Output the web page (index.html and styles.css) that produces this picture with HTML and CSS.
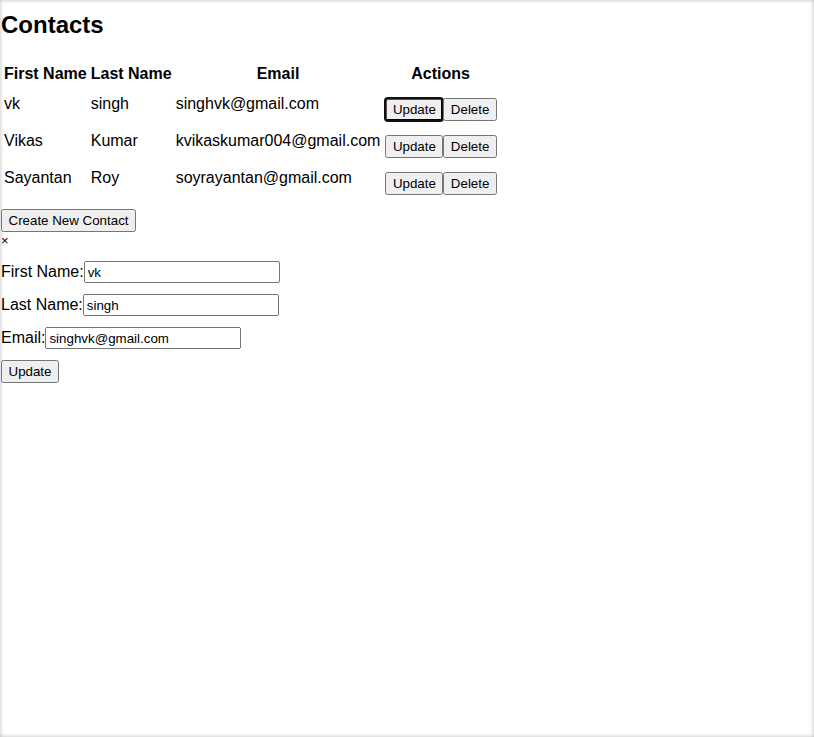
FILE: index.html
```html
<!DOCTYPE html>
<html>
<head>
<meta charset="utf-8">
<title>Contacts</title>
<link rel="stylesheet" href="styles.css">
</head>
<body>
<div class="page">
  <h2 class="title">Contacts</h2>
  <table class="contacts">
    <thead>
      <tr><th>First Name</th><th>Last Name</th><th>Email</th><th>Actions</th></tr>
    </thead>
    <tbody>
      <tr>
        <td>vk</td><td>singh</td><td>singhvk@gmail.com</td>
        <td class="actions"><div class="btns"><button class="btn focused">Update</button><button class="btn">Delete</button></div></td>
      </tr>
      <tr>
        <td>Vikas</td><td>Kumar</td><td>kvikaskumar004@gmail.com</td>
        <td class="actions"><div class="btns"><button class="btn">Update</button><button class="btn">Delete</button></div></td>
      </tr>
      <tr>
        <td>Sayantan</td><td>Roy</td><td>soyrayantan@gmail.com</td>
        <td class="actions"><div class="btns"><button class="btn">Update</button><button class="btn">Delete</button></div></td>
      </tr>
    </tbody>
  </table>
  <div class="create"><button class="btn">Create New Contact</button></div>
  <div class="modal">
    <span class="close">×</span>
    <form class="form">
      <div class="row"><label>First Name:</label><input class="field" type="text" value="vk"></div>
      <div class="row"><label>Last Name:</label><input class="field" type="text" value="singh"></div>
      <div class="row"><label>Email:</label><input class="field" type="text" value="singhvk@gmail.com"></div>
      <div class="row"><button class="btn" type="button">Update</button></div>
    </form>
  </div>
</div>
</body>
</html>
```
FILE: styles.css
```css
html, body {
  margin: 0;
  padding: 0;
  height: 100%;
  background: #ffffff;
}
body {
  font-family: "Liberation Sans", Arial, sans-serif;
  font-size: 16px;
  color: #000;
}
.page {
  min-height: 100%;
  box-sizing: border-box;
  padding: 0 1px;
  box-shadow: inset 0 0 4px rgba(0, 0, 0, 0.28);
}
.title {
  font-size: 24px;
  font-weight: bold;
  margin: 0;
  padding-top: 11px;
}
.contacts {
  margin-top: 23px;
  border-spacing: 2px;
}
.contacts th, .contacts td {
  padding: 1px;
  text-align: left;
}
.contacts th {
  text-align: center;
}
.contacts th:first-child, .contacts th:nth-child(2) {
  text-align: left;
}
.contacts td {
  height: 33px;
  vertical-align: middle;
}
.contacts td.actions {
  vertical-align: top;
  padding-left: 2px;
}
.btns {
  display: flex;
  align-items: flex-start;
  height: 33px;
  box-sizing: border-box;
  padding-top: 11px;
}
.btn {
  font-family: "Liberation Sans", Arial, sans-serif;
  font-size: 13.33px;
  margin: 0;
  height: 23px;
  flex-shrink: 0;
  box-sizing: border-box;
  padding: 1px 5.5px;
}
.btn.focused {
  outline: 2px solid #101010;
  outline-offset: -1px;
  border-radius: 3px;
}
.create {
  margin-top: 12px;
}
.close {
  display: block;
  font-size: 13px;
  line-height: 18px;
}
.form {
  margin: 0;
}
.row {
  display: flex;
  align-items: baseline;
  margin: 11px 0;
}
.field {
  font-family: "Liberation Sans", Arial, sans-serif;
  font-size: 13.33px;
  width: 196px;
  height: 22px;
  box-sizing: border-box;
  margin: 0;
}
```
